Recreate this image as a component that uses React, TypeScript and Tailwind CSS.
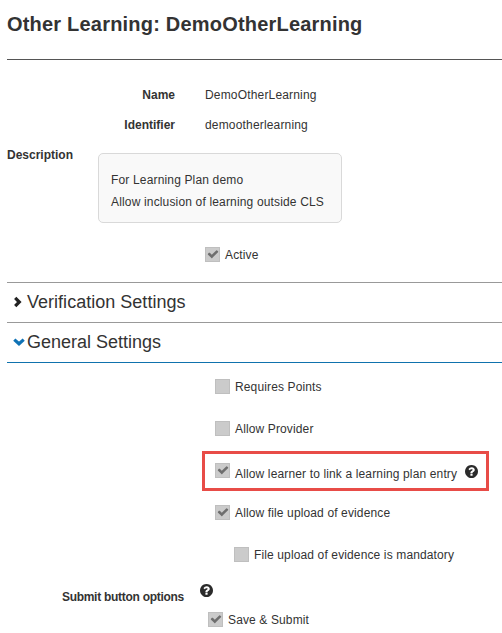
import type { ReactNode } from 'react';

function CheckBox({ checked = false, className = '' }: { checked?: boolean; className?: string }) {
  return (
    <span className={`flex h-[15px] w-[15px] shrink-0 items-center justify-center border border-[#bfbfbf] bg-[#cbcbcb] ${className}`}>
      {checked && (
        <svg viewBox="0 0 1792 1792" className="mb-px h-[12px] w-[12px]" fill="#6e6e6e">
          <path d="M1671 566q0 40-28 68l-724 724-136 136q-28 28-68 28t-68-28l-136-136-362-362q-28-28-28-68t28-68l136-136q28-28 68-28t68 28l294 295 656-657q28-28 68-28t68 28l136 136q28 28 28 68z" />
        </svg>
      )}
    </span>
  );
}

function HelpIcon({ className = '' }: { className?: string }) {
  return (
    <svg viewBox="128 128 1536 1536" className={`h-[13px] w-[13px] shrink-0 ${className}`} fill="#2b2b2b">
      <path d="M1024 1376v-192q0-14-9-23t-23-9h-192q-14 0-23 9t-9 23v192q0 14 9 23t23 9h192q14 0 23-9t9-23zm256-672q0-88-55.5-163t-138.5-116-170-41q-243 0-371 213-15 24 8 42l132 100q7 6 19 6 16 0 25-12 53-68 86-92 34-24 86-24 48 0 85.5 26t37.5 59q0 38-20 61t-68 45q-63 28-115.5 86.5t-52.5 125.5v36q0 14 9 23t23 9h192q14 0 23-9t9-23q0-19 21.5-49.5t54.5-49.5q32-18 49-28.500t46-35 44.500-48 28-60.500 12.500-81zm384 192q0 209-103 385.500t-279.500 279.500-385.500 103-385.500-103-279.500-279.500-103-385.500 103-385.500 279.500-279.500 385.500-103 385.500 103 279.500 279.500 103 385.500z" />
    </svg>
  );
}

function Field({ label, children }: { label: string; children: ReactNode }) {
  return (
    <div className="flex h-[30px] items-center">
      <span className="w-[168px] text-right font-bold">{label}</span>
      <span className="ml-[30px] tracking-[0.17px]">{children}</span>
    </div>
  );
}

function Option({ label, checked, className = '' }: { label: string; checked?: boolean; className?: string }) {
  return (
    <div className={`flex h-[15px] items-start gap-[5px] ${className}`}>
      <CheckBox checked={checked} />
      <span className="pt-px tracking-[0.13px]">{label}</span>
    </div>
  );
}

export default function App() {
  return (
    <main className="h-[633px] w-[502px] overflow-hidden bg-white pl-[7px] font-['Liberation_Sans',Arial,sans-serif] text-[12px] leading-[15px] whitespace-nowrap text-[#333]">
      <h1 className="flex h-[60px] items-center border-b border-[#555] pb-[12px] text-[20px] leading-[24px] font-bold tracking-[0.2px]">
        Other Learning: DemoOtherLearning
      </h1>
      <section className="pt-[20px]">
        <Field label="Name">DemoOtherLearning</Field>
        <Field label="Identifier">demootherlearning</Field>
        <div className="mt-[7px] flex items-start">
          <span className="w-[91px] pt-px font-bold">Description</span>
          <div className="mt-[6px] h-[70px] w-[244px] rounded-[5px] border border-[#d9d9d9] bg-[#f9f9f9] px-[12px] pt-[15px] leading-[22px] tracking-[0.16px]">
            <p>For Learning Plan demo</p>
            <p>Allow inclusion of learning outside CLS</p>
          </div>
        </div>
        <Option label="Active" checked className="mt-[24px] ml-[198px]" />
      </section>
      <div className="mt-[20px] flex h-[40px] items-center border-t border-[#999] pb-[2px] text-[18px] leading-[22px]">
        <svg viewBox="0 0 10 12" className="ml-[6px] h-[12px] w-[10px]" fill="none" stroke="#222" strokeWidth="3.2">
          <path d="M2.200 1.900 6.300 6 2.200 10.100" />
        </svg>
        <span className="ml-[4px] tracking-[0.02px]">Verification Settings</span>
      </div>
      <div className="flex h-[41px] items-center border-t border-b border-t-[#999] border-b-[#0f72ad] pb-[2px] text-[18px] leading-[22px]">
        <svg viewBox="0 0 12 10" className="ml-[6px] h-[10px] w-[12px]" fill="none" stroke="#0f72b5" strokeWidth="3.200">
          <path d="M1.300 2.600 6 6.800 10.700 2.600" />
        </svg>
        <span className="ml-[2px]">General Settings</span>
      </div>
      <Option label="Requires Points" className="mt-[16px] ml-[208px]" />
      <Option label="Allow Provider" className="mt-[27px] ml-[208px]" />
      <div className="mt-[15px] ml-[195px] flex h-[40px] w-[287px] items-start border-[3px] border-[#e84c47] pl-[10px]">
        <CheckBox checked className="mt-[9px]" />
        <span className="mt-[13px] ml-[5px] w-[222px] tracking-[0.14px]">Allow learner to link a learning plan entry</span>
        <HelpIcon className="mt-[11px] ml-[8px]" />
      </div>
      <Option label="Allow file upload of evidence" checked className="mt-[14px] ml-[208px]" />
      <Option label="File upload of evidence is mandatory" className="mt-[27px] ml-[227px]" />
      <div className="mt-[22px] flex h-[20px] items-start">
        <span className="mt-[6px] w-[177px] text-right font-bold tracking-[-0.28px]">Submit button options</span>
        <HelpIcon className="ml-[16px]" />
      </div>
      <Option label="Save &amp; Submit" checked className="mt-[8px] ml-[201px]" />
    </main>
  );
}
